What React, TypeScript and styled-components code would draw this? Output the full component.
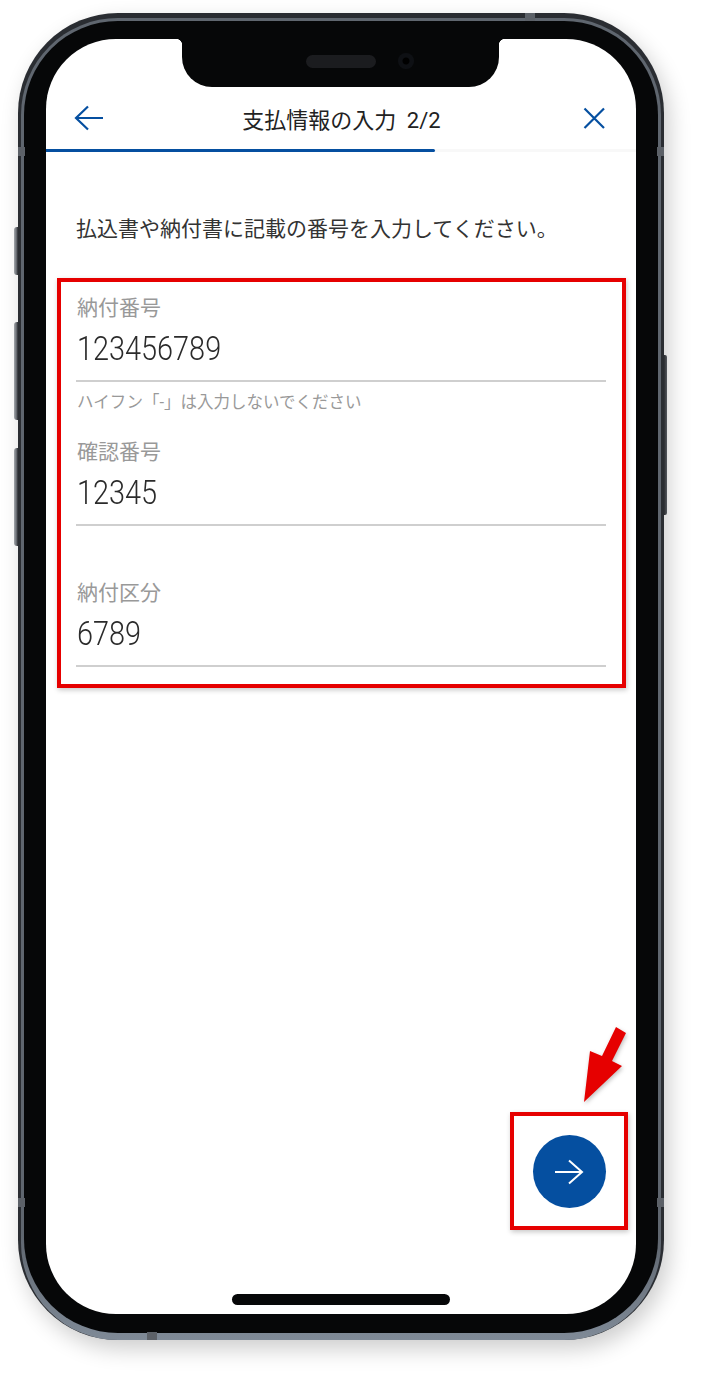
import styled, { createGlobalStyle } from "styled-components";

const BLUE = "#054fa0";
const RED = "#e60000";

const GlobalStyle = createGlobalStyle`
  html, body {
    margin: 0;
    padding: 0;
    background: #fff;
  }
  body {
    font-family: Roboto, "Noto Sans CJK JP", sans-serif;
    text-spacing-trim: space-all;
  }
`;

const Page = styled.div`
  position: relative;
  width: 705px;
  height: 1378px;
  box-sizing: border-box;
  padding: 13px 41px 38px 18px;
  background: #fff;
  overflow: hidden;
`;

const Phone = styled.div`
  position: relative;
  height: 100%;
  box-sizing: border-box;
  padding: 5px 3px 0;
  border-radius: 100px;
  background: #2a2d32;
  box-shadow: 5px 9px 22px rgba(0, 0, 0, 0.2);
`;

const Rim = styled.div`
  height: 100%;
  box-sizing: border-box;
  padding: 3px 3px 7px;
  border-radius: 97px;
  background: linear-gradient(#5f666f, #5f666f 92%, #7f8a97);
`;

const Bezel = styled.div`
  height: 100%;
  box-sizing: border-box;
  padding: 18px 22px 19px;
  border-radius: 94px;
  background: #060708;
`;

const Screen = styled.div`
  position: relative;
  display: flex;
  flex-direction: column;
  height: 100%;
  border-radius: 70px;
  background: #fff;
  overflow: hidden;
`;

const SideButton = styled.div<{ $side: "left" | "right"; $top: number; $height: number }>`
  position: absolute;
  ${(p) => (p.$side === "left" ? "left: -4px;" : "right: -3px;")}
  top: ${(p) => p.$top}px;
  width: ${(p) => (p.$side === "left" ? 4 : 3)}px;
  height: ${(p) => p.$height}px;
  border-radius: ${(p) => (p.$side === "left" ? "3px 0 0 3px" : "0 2px 2px 0")};
  background: ${(p) =>
    p.$side === "left"
      ? "linear-gradient(90deg, #a4a8ad, #6a6e74 60%, #2a2c30)"
      : "linear-gradient(90deg, #2a2c30, #55595f)"};
`;

const Band = styled.div<{ $pos: string; $wide?: boolean }>`
  position: absolute;
  ${(p) => p.$pos}
  width: ${(p) => (p.$wide ? "10px" : "7px")};
  height: ${(p) => (p.$wide ? "8px" : "9px")};
  background: #5c6168;
`;

const Notch = styled.div`
  position: absolute;
  top: 0;
  left: 136px;
  width: 317px;
  height: 48px;
  border-radius: 0 0 30px 30px;
  background: #060708;
  &::before,
  &::after {
    content: "";
    position: absolute;
    top: 0;
    width: 5px;
    height: 5px;
  }
  &::before {
    left: -5px;
    background: radial-gradient(circle at 0 100%, #fff 4.6px, #060708 5px);
  }
  &::after {
    right: -5px;
    background: radial-gradient(circle at 100% 100%, #fff 4.6px, #060708 5px);
  }
`;

const Speaker = styled.div`
  position: absolute;
  top: 16px;
  left: 124px;
  width: 70px;
  height: 13px;
  border-radius: 7px;
  background: #1b1c1f;
`;

const Camera = styled.div`
  position: absolute;
  top: 14px;
  left: 216px;
  width: 16px;
  height: 16px;
  border-radius: 50%;
  background: radial-gradient(circle, #000 0 3px, #0e1014 4px 8px);
`;

const Header = styled.header`
  display: flex;
  align-items: flex-end;
  justify-content: space-between;
  flex: none;
  height: 110px;
  box-sizing: border-box;
  padding: 0 27px 12px 28px;
`;

const Title = styled.h1`
  margin: 0;
  font-size: 22px;
  font-weight: 400;
  line-height: 32px;
  word-spacing: 5px;
  color: #222;
`;

const IconButton = styled.div`
  display: flex;
  width: 30px;
  height: 32px;
  margin-bottom: 3px;
  align-items: center;
  justify-content: center;
  color: ${BLUE};
`;

const Progress = styled.div`
  flex: none;
  height: 3px;
  background: #f8f8f8;
`;

const ProgressFill = styled.div`
  height: 100%;
  border-radius: 0 2px 2px 0;
  background: ${BLUE};
`;

const Lead = styled.p`
  flex: none;
  margin: 61px 0 33px 30px;
  font-size: 21px;
  line-height: 32px;
  color: #333;
  white-space: nowrap;
`;

const Highlight = styled.div`
  box-sizing: border-box;
  border: 4px solid ${RED};
  box-shadow: 1px 2px 5px rgba(0, 0, 0, 0.22);
`;

const FormBox = styled(Highlight)`
  flex: none;
  width: 569px;
  height: 410px;
  margin-left: 11px;
  padding: 11px 16px 0 15px;
`;

const Field = styled.div<{ $gap: number }>`
  margin-top: ${(p) => p.$gap}px;
`;

const Label = styled.div`
  padding-left: 1px;
  font-size: 21px;
  line-height: 30px;
  color: #999;
`;

const Value = styled.div`
  height: 59px;
  box-sizing: border-box;
  padding: 4px 0 0 1px;
  line-height: 44px;
  border-bottom: 2px solid #cfcfcf;
`;

const ValueText = styled.span`
  display: inline-block;
  font-family: Roboto, sans-serif;
  font-size: 33px;
  font-weight: 300;
  color: #2b2b2b;
  transform: scaleX(0.875);
  transform-origin: left center;
`;

const Hint = styled.div`
  height: 55px;
  box-sizing: border-box;
  padding: 10px 0 0 1px;
  font-size: 16.5px;
  line-height: 22px;
  color: #999;
  white-space: nowrap;
`;

const ActionRow = styled.div`
  display: flex;
  flex: none;
  justify-content: flex-end;
  margin-top: auto;
  padding-right: 8px;
`;

const ActionBox = styled(Highlight)`
  display: flex;
  width: 118px;
  height: 118px;
  align-items: center;
  justify-content: center;
`;

const NextButton = styled.div`
  display: flex;
  width: 73px;
  height: 73px;
  margin-top: 1px;
  align-items: center;
  justify-content: center;
  border-radius: 50%;
  background: ${BLUE};
  color: #fff;
`;

const HomeBar = styled.div`
  flex: none;
  width: 218px;
  height: 11px;
  margin: 64px auto 9px;
  border-radius: 6px;
  background: #060708;
`;

const Pointer = styled.svg`
  position: absolute;
  left: 580px;
  top: 1024px;
  filter: drop-shadow(1px 2px 2px rgba(0, 0, 0, 0.25));
`;

const fields = [
  { label: "納付番号", value: "123456789", gap: 0, hint: "ハイフン「-」は入力しないでください" },
  { label: "確認番号", value: "12345", gap: 0 },
  { label: "納付区分", value: "6789", gap: 52 },
];

export default function App() {
  return (
    <Page>
      <GlobalStyle />
      <Phone>
        <SideButton $side="left" $top={214} $height={48} />
        <SideButton $side="left" $top={309} $height={98} />
        <SideButton $side="left" $top={435} $height={98} />
        <SideButton $side="right" $top={342} $height={160} />
        <Band $pos="left: 0; top: 134px;" />
        <Band $pos="right: 0; top: 134px;" />
        <Band $pos="left: 0; top: 1185px;" />
        <Band $pos="right: 0; top: 1185px;" />
        <Band $wide $pos="left: 507px; top: 0;" />
        <Band $wide $pos="left: 129px; bottom: 0;" />
        <Rim>
          <Bezel>
            <Screen>
              <Notch>
                <Speaker />
                <Camera />
              </Notch>
              <Header>
                <IconButton>
                  <svg width="30" height="26" viewBox="0 0 30 26" fill="none" stroke="currentColor" strokeWidth="2.2">
                    <path d="M29 13H2M14 1.5 2 13l12 11.5" />
                  </svg>
                </IconButton>
                <Title>支払情報の入力 2/2</Title>
                <IconButton>
                  <svg width="22" height="22" viewBox="0 0 22 22" fill="none" stroke="currentColor" strokeWidth="2.2">
                    <path d="M1.5 1.5l19.5 19.5M21 1.5 1.5 21" />
                  </svg>
                </IconButton>
              </Header>
              <Progress>
                <ProgressFill style={{ width: `${(2 / 3) * 100 - 0.7}%` }} />
              </Progress>
              <Lead>払込書や納付書に記載の番号を入力してください。</Lead>
              <FormBox>
                {fields.map((f) => (
                  <Field key={f.label} $gap={f.gap}>
                    <Label>{f.label}</Label>
                    <Value>
                      <ValueText>{f.value}</ValueText>
                    </Value>
                    {f.hint && <Hint>{f.hint}</Hint>}
                  </Field>
                ))}
              </FormBox>
              <ActionRow>
                <ActionBox>
                  <NextButton>
                    <svg width="30" height="26" viewBox="0 0 30 26" fill="none" stroke="currentColor" strokeWidth="2">
                      <path d="M1 13h27M15 1.5 28 13 15 24.5" />
                    </svg>
                  </NextButton>
                </ActionBox>
              </ActionRow>
              <HomeBar />
            </Screen>
          </Bezel>
        </Rim>
      </Phone>
      <Pointer width="50" height="82" viewBox="0 0 50 82">
        <path d="M36 3 46 9 32 37 42 42 4 78 10 27 22 32Z" fill={RED} />
      </Pointer>
    </Page>
  );
}
